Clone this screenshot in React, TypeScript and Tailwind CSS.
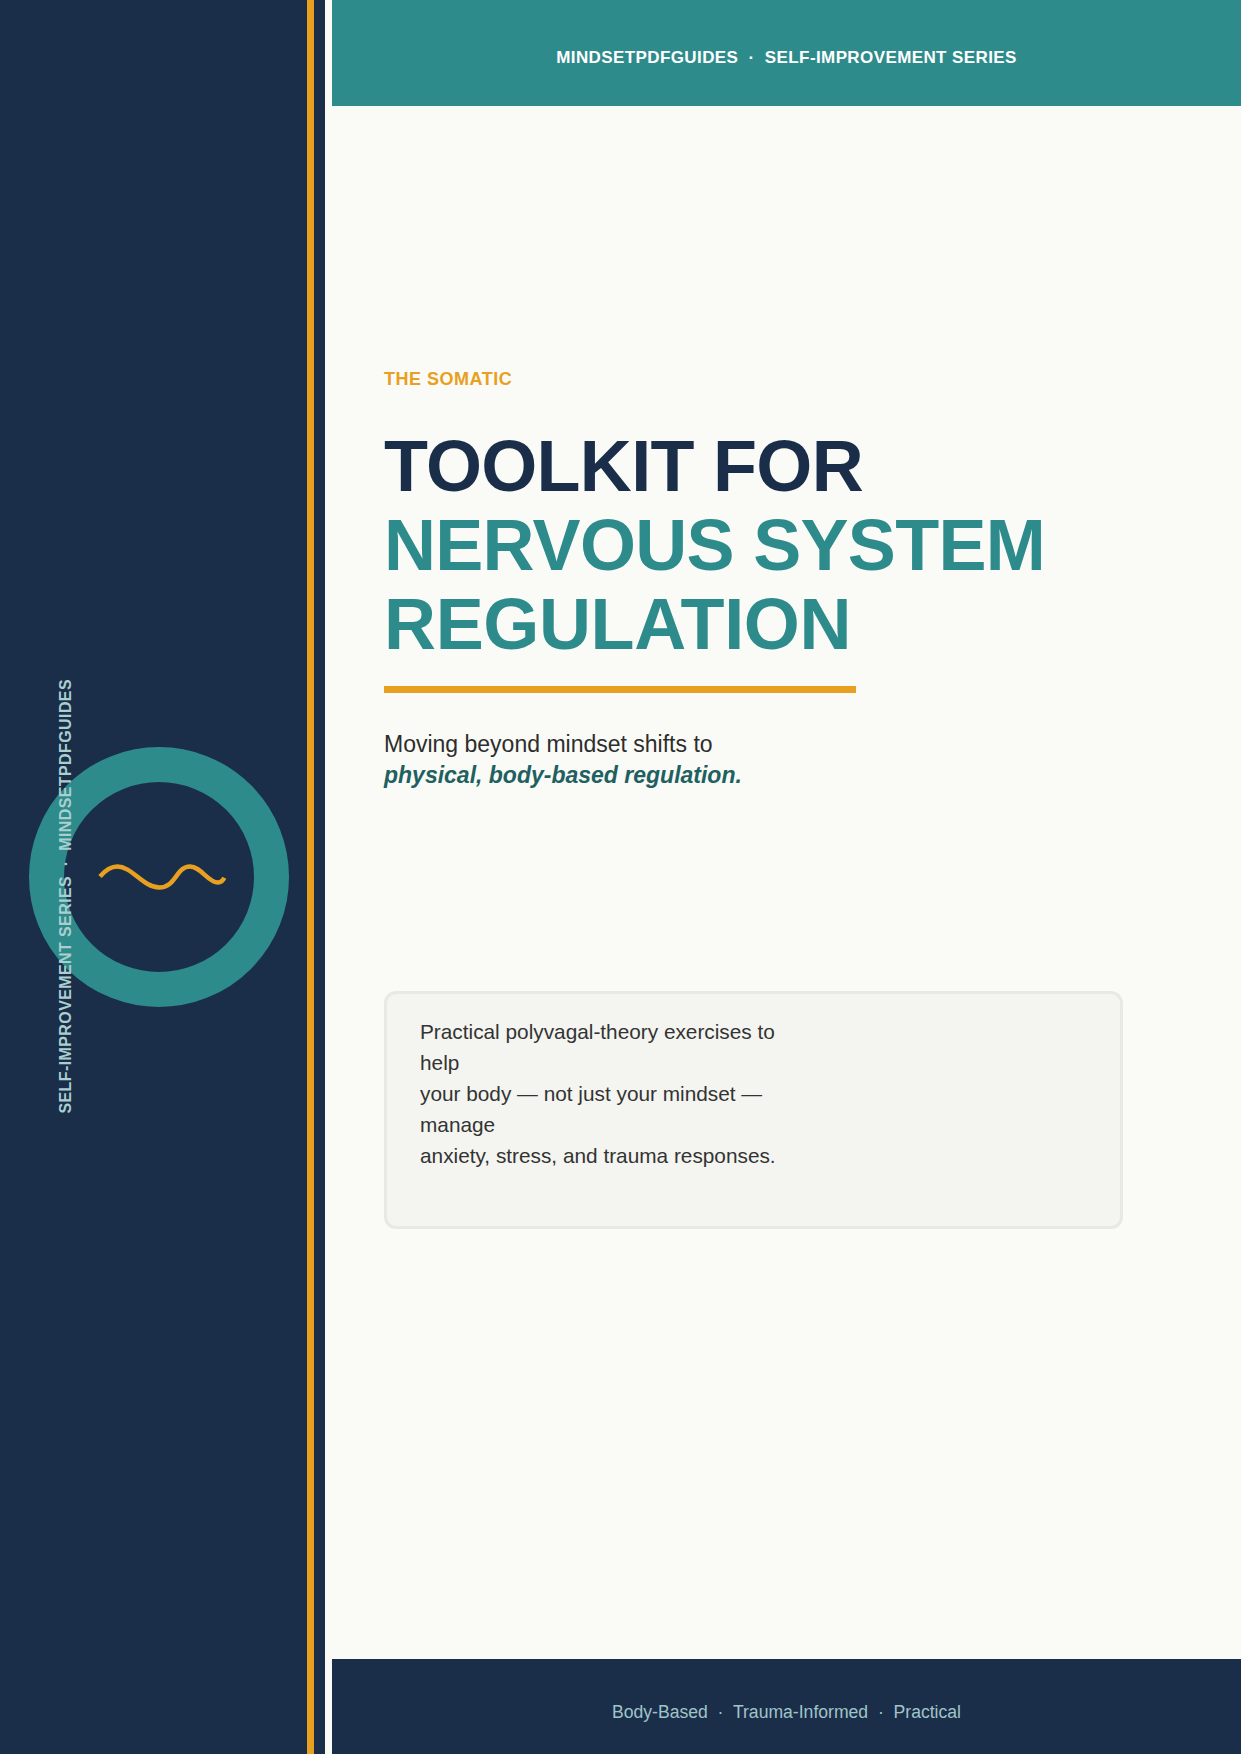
const sans = { fontFamily: '"Liberation Sans", Arial, sans-serif' };

export default function App() {
  return (
    <div className="flex h-[1754px] w-[1241px] overflow-hidden bg-[#fafbf7]" style={sans}>
      {/* left band */}
      <aside className="relative flex w-[325px] shrink-0 bg-[#1a2e4a]">
        <div className="flex w-[307px] items-center pl-[29px]">
          <svg width="260" height="260" viewBox="0 0 260 260" fill="none">
            <circle cx="130" cy="130" r="112.5" stroke="#2e8b8b" strokeWidth="35" />
            <path
              d="M71 129.5C77 122.5 82 119.5 88.3 119.5C103 119.5 114 140.5 130.3 140.5C147 140.5 147 119.5 161 119.5C172 119.5 179 135.5 189 135.5C192 135.5 194 133.5 195.3 130.8"
              stroke="#e8a020"
              strokeWidth="4.5"
            />
          </svg>
        </div>
        <div className="w-[7px] bg-[#e8a020]" />
        <span className="absolute left-[54px] top-[679px] rotate-180 whitespace-pre text-[16px] font-bold tracking-[0.4px] text-[#a9cfcf] [writing-mode:vertical-rl]">
          SELF-IMPROVEMENT SERIES  ·  MINDSETPDFGUIDES
        </span>
      </aside>

      {/* main column */}
      <main className="flex min-w-0 flex-1 flex-col">
        <header className="ml-[7px] flex h-[106px] items-center justify-center whitespace-pre bg-[#2e8b8b] pt-[10px] text-[17px] font-bold tracking-[0.4px] text-white">
          MINDSETPDFGUIDES  ·  SELF-IMPROVEMENT SERIES
        </header>

        <div className="flex-1 pl-[59px] pt-[262px]">
          <p className="text-[18px] font-bold leading-[22px] tracking-[0.5px] text-[#e8a020]">THE SOMATIC</p>
          <h1 className="mt-[37px] text-[72px] font-bold leading-[79px] tracking-[-0.7px]">
            <span className="block text-[#1a2e4a]">TOOLKIT FOR</span>
            <span className="block text-[#2e8b8b]">NERVOUS SYSTEM</span>
            <span className="block tracking-[-0.35px] text-[#2e8b8b]">REGULATION</span>
          </h1>
          <div className="mt-[22px] h-[7px] w-[472px] bg-[#e8a020]" />
          <p className="mt-[36px] text-[23px] leading-[31px] text-[#2d2d2d]">
            Moving beyond mindset shifts to
            <br />
            <em className="font-bold text-[#1f6060]">physical, body-based regulation.</em>
          </p>
          <div className="mt-[200px] h-[238px] w-[739px] rounded-[12px] border-[3px] border-[#e8e8e4] bg-[#f4f5f0] px-[33px] pt-[22px] text-[20.8px] leading-[31px] text-[#333333]">
            <p>Practical polyvagal-theory exercises to</p>
            <p>help</p>
            <p>your body — not just your mindset —</p>
            <p>manage</p>
            <p>anxiety, stress, and trauma responses.</p>
          </div>
        </div>

        <footer className="ml-[7px] flex h-[95px] items-center justify-center whitespace-pre bg-[#1a2e4a] pt-[12px] text-[17.6px] text-[#a0c4c8]">
          Body-Based  ·  Trauma-Informed  ·  Practical
        </footer>
      </main>
    </div>
  );
}
